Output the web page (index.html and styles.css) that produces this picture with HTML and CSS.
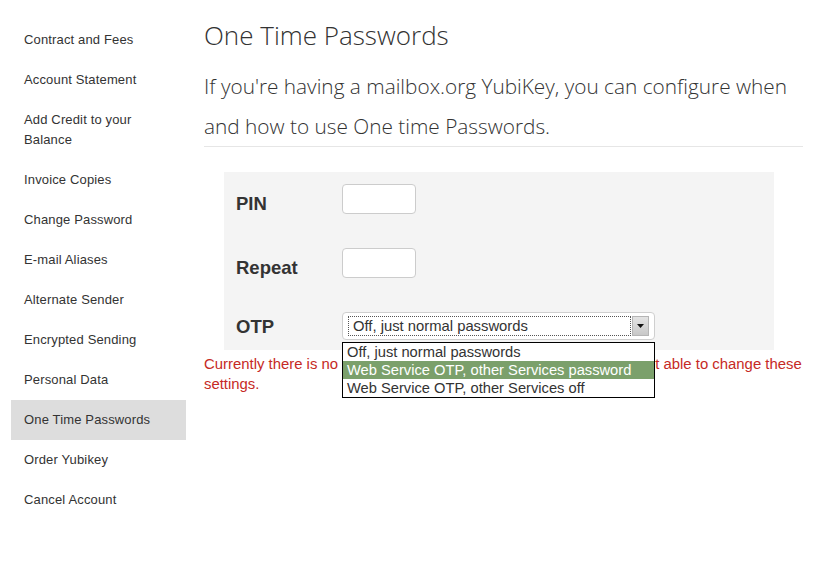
FILE: index.html
```html
<!DOCTYPE html>
<html>
<head>
<meta charset="utf-8">
<link rel="stylesheet" href="styles.css">
</head>
<body>
<div class="layout">
  <nav class="sidebar">
    <a class="nav-item">Contract and Fees</a>
    <a class="nav-item">Account Statement</a>
    <a class="nav-item">Add Credit to your Balance</a>
    <a class="nav-item">Invoice Copies</a>
    <a class="nav-item">Change Password</a>
    <a class="nav-item">E-mail Aliases</a>
    <a class="nav-item">Alternate Sender</a>
    <a class="nav-item">Encrypted Sending</a>
    <a class="nav-item">Personal Data</a>
    <a class="nav-item active">One Time Passwords</a>
    <a class="nav-item">Order Yubikey</a>
    <a class="nav-item">Cancel Account</a>
  </nav>
  <main class="main">
    <h1 class="title">One Time Passwords</h1>
    <p class="lead">If you're having a mailbox.org YubiKey, you can configure when and how to use One time Passwords.</p>
    <hr class="divider">
    <form class="panel">
      <div class="row row-input">
        <label class="label">PIN</label>
        <span class="text-input"></span>
      </div>
      <div class="row row-input">
        <label class="label">Repeat</label>
        <span class="text-input"></span>
      </div>
      <div class="row row-select">
        <label class="label">OTP</label>
        <div class="select-wrap">
          <div class="select">
            <span class="select-value">Off, just normal passwords</span>
            <span class="select-btn"><svg width="7" height="4" viewBox="0 0 7 4"><path d="M0 0h7L3.5 4z" fill="#111"/></svg></span>
          </div>
          <ul class="dropdown">
            <li class="opt">Off, just normal passwords</li>
            <li class="opt selected">Web Service OTP, other Services password</li>
            <li class="opt">Web Service OTP, other Services off</li>
          </ul>
        </div>
      </div>
    </form>
    <p class="error">Currently there is no YubiKey assigned to your account, so you're not able to change these settings.</p>
  </main>
</div>
</body>
</html>
```
FILE: styles.css
```css
html, body {
  margin: 0;
  padding: 0;
  background: #fff;
}
body {
  font-family: "Liberation Sans", Arial, sans-serif;
  color: #333;
}
.layout {
  display: flex;
  align-items: flex-start;
}
.sidebar {
  width: 175px;
  margin-left: 11px;
  padding-top: 20px;
  display: flex;
  flex-direction: column;
}
.nav-item {
  display: block;
  padding: 10px 13px;
  font-size: 13px;
  line-height: 20px;
  letter-spacing: 0.15px;
  color: #333;
}
.nav-item.active {
  background: #dddddd;
}
.main {
  width: 599px;
  margin-left: 18px;
  padding-top: 20px;
}
.title {
  margin: 0;
  font-family: "Open Sans", sans-serif;
  font-weight: 300;
  font-size: 26px;
  line-height: 30px;
  color: #333;
}
.lead {
  margin: 16px 0 0;
  font-family: "Open Sans", sans-serif;
  font-weight: 300;
  font-size: 20.8px;
  line-height: 40px;
  color: #333;
}
.divider {
  margin: 0;
  border: 0;
  border-top: 1px solid #e6e6e6;
}
.panel {
  margin: 25px 0 0 20px;
  width: 526px;
  padding: 12px 12px 10px;
  background: #f4f4f4;
  display: flex;
  flex-direction: column;
  gap: 34px;
}
.row {
  display: flex;
  align-items: flex-start;
}
.label {
  width: 106px;
  font-weight: bold;
  font-size: 18.5px;
  line-height: 20px;
  color: #333;
}
.row-input .label {
  padding-top: 10px;
}
.row-select .label {
  padding-top: 5px;
}
.text-input {
  display: block;
  width: 72px;
  height: 28px;
  background: #fff;
  border: 1px solid #cccccc;
  border-radius: 4px;
}
.select-wrap {
  position: relative;
}
.select {
  width: 301px;
  height: 20px;
  padding: 3px 5px 3px 5px;
  background: #fff;
  border: 1px solid #cfcfcf;
  border-radius: 4px;
  display: flex;
  align-items: center;
}
.select-value {
  flex: 1;
  height: 18px;
  border: 1px dotted #555;
  font-size: 14.8px;
  line-height: 18px;
  padding-left: 4px;
  color: #333;
  white-space: nowrap;
}
.select-btn {
  width: 15px;
  height: 18px;
  margin-left: 1px;
  background: linear-gradient(#e4e4e4, #c8c8c8);
  border: 1px solid #b5b5b5;
  display: flex;
  align-items: center;
  justify-content: center;
}
.dropdown {
  position: absolute;
  left: 0;
  top: 30px;
  width: 311px;
  margin: 0;
  padding: 0;
  list-style: none;
  background: #fff;
  border: 1px solid #000;
  z-index: 5;
}
.opt {
  height: 18px;
  line-height: 18px;
  padding-left: 4px;
  font-size: 14.7px;
  color: #333;
  white-space: nowrap;
}
.opt.selected {
  background: #7ba06b;
  color: #fff;
}
.error {
  margin: 4px -12px 0 0;
  font-size: 14.9px;
  line-height: 20px;
  color: #c62a25;
}
```
